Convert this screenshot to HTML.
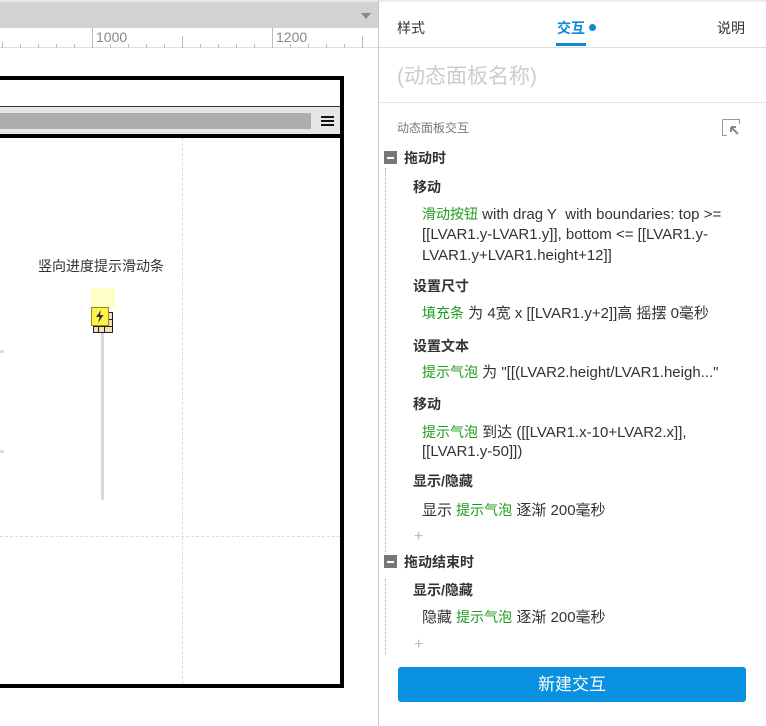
<!DOCTYPE html>
<html><head><meta charset="utf-8"><style>
*{margin:0;padding:0;box-sizing:border-box}
body{width:766px;height:726px;position:relative;overflow:hidden;background:#fff;font-family:"Liberation Sans","Noto Sans CJK SC",sans-serif;color:#333}
.a{position:absolute;white-space:nowrap}
.t{font-size:14px;line-height:20px}
.l{font-size:15px;line-height:20px}
.b{font-weight:bold}
.g{color:#1f9a1f;font-size:14px}
</style></head><body>
<div class="a" style="left:0;top:0;width:378px;height:28px;background:#d2d2d2;border-top:2px solid #e6e6e6"></div>
<div class="a" style="left:361px;top:13px;width:0;height:0;border-left:5px solid transparent;border-right:5px solid transparent;border-top:6px solid #888"></div>
<div class="a" style="left:0;top:28px;width:378px;height:20px;background:#fff;border-bottom:1px solid #ddd"></div>
<svg class="a" style="left:0;top:28px" width="378" height="20">
<g stroke="#bbb" stroke-width="1">
<line x1="2.5" y1="14" x2="2.5" y2="20"/><line x1="20.5" y1="16" x2="20.5" y2="20"/><line x1="38.5" y1="16" x2="38.5" y2="20"/><line x1="56.5" y1="16" x2="56.5" y2="20"/><line x1="74.5" y1="16" x2="74.5" y2="20"/>
<line x1="92.5" y1="0" x2="92.5" y2="20"/><line x1="110.5" y1="16" x2="110.5" y2="20"/><line x1="128.5" y1="16" x2="128.5" y2="20"/><line x1="146.5" y1="16" x2="146.5" y2="20"/><line x1="164.5" y1="16" x2="164.5" y2="20"/>
<line x1="182.5" y1="8" x2="182.5" y2="20"/><line x1="200.5" y1="16" x2="200.5" y2="20"/><line x1="218.5" y1="16" x2="218.5" y2="20"/><line x1="236.5" y1="16" x2="236.5" y2="20"/><line x1="254.5" y1="16" x2="254.5" y2="20"/>
<line x1="272.5" y1="0" x2="272.5" y2="20"/><line x1="290.5" y1="16" x2="290.5" y2="20"/><line x1="308.5" y1="16" x2="308.5" y2="20"/><line x1="326.5" y1="16" x2="326.5" y2="20"/><line x1="344.5" y1="16" x2="344.5" y2="20"/><line x1="362.5" y1="8" x2="362.5" y2="20"/>
</g>
<text x="96" y="14" font-size="14" fill="#888" font-family="Liberation Sans">1000</text>
<text x="276" y="14" font-size="14" fill="#888" font-family="Liberation Sans">1200</text>
</svg>
<div class="a" style="left:-4px;top:76px;width:348px;height:612px;border:4px solid #000;background:#fff"></div>
<div class="a" style="left:0;top:106px;width:340px;height:28px;background:#e6e6e6;border-top:1px solid #333"></div>
<div class="a" style="left:0;top:113px;width:311px;height:16px;background:#adadad"></div>
<div class="a" style="left:321px;top:116px;width:13px;height:2px;background:#111;box-shadow:0 4px 0 #111,0 8px 0 #111"></div>
<div class="a" style="left:0;top:134px;width:340px;height:4px;background:#000"></div>
<div class="a" style="left:182px;top:138px;width:0;height:546px;border-left:1px dashed #ddd"></div>
<div class="a" style="left:0;top:536px;width:340px;height:0;border-top:1px dashed #ddd"></div>
<div class="a" style="left:0;top:350px;width:4px;height:3px;background:#ddd"></div>
<div class="a" style="left:0;top:450px;width:4px;height:3px;background:#ddd"></div>
<div class="a t" style="left:38px;top:256px;color:#333">竖向进度提示滑动条</div>
<div class="a" style="left:91px;top:288px;width:24px;height:20px;background:#ffffc8"></div>
<div class="a" style="left:101px;top:332px;width:3px;height:168px;background:#d8d8d8;border-radius:2px"></div>
<svg class="a" style="left:90px;top:306px" width="26" height="30">
<rect x="3.5" y="6.5" width="19" height="20" fill="#f5deb3" stroke="#222"/>
<path d="M3.5 13.5H22.5M3.5 20.5H22.5M10.5 13.5V20.5M16.5 13.5V20.5M8.5 20.5V26.5M14.5 20.5V26.5M13.5 6.5V13.5" stroke="#222" fill="none"/>
<rect x="1.5" y="1.5" width="17" height="18" fill="#fff34a" stroke="#8a8a30"/>
<path d="M11 4L6 11H9.5L8 17L13.5 9H10Z" fill="#333"/>
</svg>
<div class="a" style="left:378px;top:0;width:1px;height:726px;background:#ccc"></div>
<div class="a" style="left:379px;top:0;width:387px;height:2px;background:#ececec"></div>
<div class="a t" style="left:397px;top:18px;color:#333">样式</div>
<div class="a t" style="left:557px;top:18px;color:#0a8ad8;font-weight:bold">交互</div>
<div class="a" style="left:589px;top:24px;width:7px;height:7px;border-radius:50%;background:#0a8ad8"></div>
<div class="a t" style="left:717px;top:18px;color:#333">说明</div>
<div class="a" style="left:556px;top:43px;width:30px;height:3px;background:#0a8ad8"></div>
<div class="a" style="left:379px;top:47px;width:387px;height:1px;background:#ddd"></div>
<div class="a" style="left:397px;top:62px;font-size:21px;line-height:30px;color:#ccc">(动态面板名称)</div>
<div class="a" style="left:379px;top:102px;width:387px;height:1px;background:#e6e6e6"></div>
<div class="a" style="left:397px;top:119px;font-size:12px;line-height:18px;color:#777">动态面板交互</div>
<svg class="a" style="left:722px;top:119px" width="20" height="18"><path d="M0.5 0.5H17.5V5M0.5 0.5V16.5H5" stroke="#999" fill="none"/><path d="M9 8L16 15M9 8V13M9 8H14" stroke="#888" stroke-width="2" fill="none"/></svg>
<div class="a" style="left:384px;top:151px;width:13px;height:13px;background:#777"></div>
<div class="a" style="left:387px;top:157px;width:7px;height:2px;background:#fff"></div>
<div class="a t b" style="left:404px;top:148px">拖动时</div>
<div class="a" style="left:385px;top:168px;width:0;height:388px;border-left:1px dotted #aaa"></div>
<div class="a t b" style="left:413px;top:177px">移动</div>
<div class="a l" style="left:422px;top:204px"><span class="g">滑动按钮</span> with drag Y&nbsp; with boundaries: top &gt;=</div>
<div class="a l" style="left:422px;top:225px">[[LVAR1.y-LVAR1.y]], bottom &lt;= [[LVAR1.y-</div>
<div class="a l" style="left:422px;top:246px">LVAR1.y+LVAR1.height+12]]</div>
<div class="a t b" style="left:413px;top:276px">设置尺寸</div>
<div class="a l" style="left:422px;top:303px"><span class="g">填充条</span> 为 4宽 x [[LVAR1.y+2]]高 摇摆 0毫秒</div>
<div class="a t b" style="left:413px;top:336px">设置文本</div>
<div class="a l" style="left:422px;top:362px"><span class="g">提示气泡</span> 为 "[[(LVAR2.height/LVAR1.heigh..."</div>
<div class="a t b" style="left:413px;top:394px">移动</div>
<div class="a l" style="left:422px;top:422px"><span class="g">提示气泡</span> 到达 ([[LVAR1.x-10+LVAR2.x]],</div>
<div class="a l" style="left:422px;top:442px">[[LVAR1.y-50]])</div>
<div class="a t b" style="left:413px;top:471px">显示/隐藏</div>
<div class="a l" style="left:422px;top:500px">显示 <span class="g">提示气泡</span> 逐渐 200毫秒</div>
<div class="a" style="left:414px;top:527px;font-size:16px;line-height:20px;color:#bbb">+</div>
<div class="a" style="left:384px;top:555px;width:13px;height:13px;background:#777"></div>
<div class="a" style="left:387px;top:561px;width:7px;height:2px;background:#fff"></div>
<div class="a t b" style="left:404px;top:552px">拖动结束时</div>
<div class="a" style="left:385px;top:579px;width:0;height:76px;border-left:1px dotted #aaa"></div>
<div class="a t b" style="left:413px;top:580px">显示/隐藏</div>
<div class="a l" style="left:422px;top:607px">隐藏 <span class="g">提示气泡</span> 逐渐 200毫秒</div>
<div class="a" style="left:414px;top:635px;font-size:16px;line-height:20px;color:#bbb">+</div>
<div class="a" style="left:398px;top:667px;width:348px;height:35px;background:#0990de;border-radius:3px;color:#fff;font-size:17px;line-height:35px;text-align:center">新建交互</div>
</body></html>
